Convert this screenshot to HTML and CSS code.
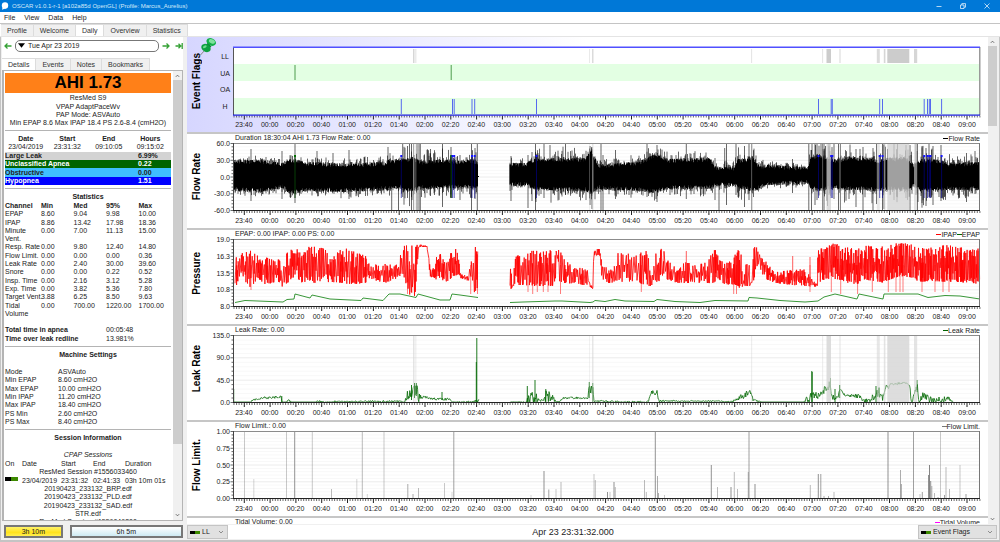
FILE: index.html
```html
<!DOCTYPE html>
<html lang="en">
<head>
<meta charset="utf-8">
<title>OSCAR</title>
<link rel="stylesheet" href="styles.css">
</head>
<body>
<div class="app">
  <header class="titlebar">
    <svg class="logo" viewBox="0 0 8 8" aria-hidden="true"><ellipse cx="4" cy="3.6" rx="3.2" ry="3.3" fill="#fff"/><path d="M1.6 5.5L1 7.8L4 6.6z" fill="#fff"/></svg>
    <span class="window-title">OSCAR v1.0.1-r-1 [a102a85d OpenGL] (Profile: Marcus_Aurelius)</span>
    <div class="window-buttons">
      <button aria-label="Minimize"><svg viewBox="0 0 6 6"><path d="M0.5 3.5H5.5"/></svg></button>
      <button aria-label="Restore"><svg viewBox="0 0 6 6"><path d="M0.5 2H4V5.5H0.5zM1.8 2V0.6H5.5V4.2H4"/></svg></button>
      <button aria-label="Close"><svg viewBox="0 0 6 6"><path d="M0.5 0.5L5.5 5.5M5.5 0.5L0.5 5.5"/></svg></button>
    </div>
  </header>
  <nav class="menubar">
    <button>File</button><button>View</button><button>Data</button><button>Help</button>
  </nav>
  <div class="tabs main-tabs" role="tablist">
    <button role="tab">Profile</button><button role="tab">Welcome</button><button role="tab" aria-selected="true">Daily</button><button role="tab">Overview</button><button role="tab">Statistics</button>
  </div>
  <main class="workspace">
    <aside class="sidebar">
      <div class="datenav">
        <button class="arrow" aria-label="Previous day"><svg viewBox="0 0 8 8"><path d="M7.5 4H1M3.5 1.5L1 4L3.5 6.5"/></svg></button>
        <button class="date"><svg viewBox="0 0 8 5" aria-hidden="true"><path d="M0 0H8L4 5z"/></svg>Tue Apr 23 2019</button>
        <button class="arrow" aria-label="Next day"><svg viewBox="0 0 8 8"><path d="M0.5 4H7M4.5 1.5L7 4L4.5 6.5"/></svg></button>
        <button class="arrow last" aria-label="Latest day"><svg viewBox="0 0 8 8"><path d="M0.5 4H5.5M3.5 1.8L5.8 4L3.5 6.2M7.2 1V7"/></svg></button>
      </div>
      <div class="tabs side-tabs" role="tablist">
        <button role="tab" aria-selected="true">Details</button><button role="tab">Events</button><button role="tab">Notes</button><button role="tab">Bookmarks</button>
      </div>
      <div class="pane">
        <div class="details">
          <h1>AHI 1.73</h1>
          <div class="machine"><p>ResMed S9</p><p>VPAP AdaptPaceWv</p><p>PAP Mode: ASVAuto</p><p>Min EPAP 8.6 Max IPAP 18.4 PS 2.6-8.4 (cmH2O)</p></div>
          <hr>
          <table class="span-table">
            <tr><th>Date</th><th>Start</th><th>End</th><th>Hours</th></tr>
            <tr><td>23/04/2019</td><td>23:31:32</td><td>09:10:05</td><td>09:15:02</td></tr>
          </table>
          <table class="index-table">
            <tr class="leak"><th>Large Leak</th><td>6.99%</td></tr>
            <tr class="unclassified"><th>Unclassified Apnea</th><td>0.22</td></tr>
            <tr class="obstructive"><th>Obstructive</th><td>0.00</td></tr>
            <tr class="hypopnea"><th>Hypopnea</th><td>1.51</td></tr>
          </table>
          <hr>
          <table class="stats-table">
            <caption>Statistics</caption>
            <colgroup><col class="c-name"><col><col><col><col></colgroup>
            <tr><th>Channel</th><th>Min</th><th>Med</th><th>95%</th><th>Max</th></tr>
            <tr><td>EPAP</td><td>8.60</td><td>9.04</td><td>9.98</td><td>10.00</td></tr>
            <tr><td>IPAP</td><td>8.86</td><td>13.42</td><td>17.98</td><td>18.36</td></tr>
            <tr class="two"><td>Minute<br>Vent.</td><td>0.00</td><td>7.00</td><td>11.13</td><td>15.00</td></tr>
            <tr><td>Resp. Rate</td><td>0.00</td><td>9.80</td><td>12.40</td><td>14.80</td></tr>
            <tr><td>Flow Limit.</td><td>0.00</td><td>0.00</td><td>0.00</td><td>0.36</td></tr>
            <tr><td>Leak Rate</td><td>0.00</td><td>2.40</td><td>30.00</td><td>39.60</td></tr>
            <tr><td>Snore</td><td>0.00</td><td>0.00</td><td>0.22</td><td>0.52</td></tr>
            <tr><td>Insp. Time</td><td>0.00</td><td>2.16</td><td>3.12</td><td>5.28</td></tr>
            <tr><td>Exp. Time</td><td>0.00</td><td>3.82</td><td>5.36</td><td>7.80</td></tr>
            <tr><td>Target Vent.</td><td>3.88</td><td>6.25</td><td>8.50</td><td>9.63</td></tr>
            <tr><td>Tidal<br>Volume</td><td>0.00</td><td>700.00</td><td>1220.00</td><td>1700.00</td></tr>
          </table>
          <table class="totals-table">
            <tr><th>Total time in apnea</th><td>00:05:48</td></tr>
            <tr><th>Time over leak redline</th><td>13.981%</td></tr>
          </table>
          <hr>
          <h2>Machine Settings</h2>
          <table class="settings-table">
            <tr><td>Mode</td><td>ASVAuto</td></tr>
            <tr><td>Min EPAP</td><td>8.60 cmH2O</td></tr>
            <tr><td>Max EPAP</td><td>10.00 cmH2O</td></tr>
            <tr><td>Min IPAP</td><td>11.20 cmH2O</td></tr>
            <tr><td>Max IPAP</td><td>18.40 cmH2O</td></tr>
            <tr><td>PS Min</td><td>2.60 cmH2O</td></tr>
            <tr><td>PS Max</td><td>8.40 cmH2O</td></tr>
          </table>
          <hr>
          <h2>Session Information</h2>
          <table class="session-table">
            <caption>CPAP Sessions</caption>
            <colgroup><col class="c-on"><col class="c-date"><col class="c-time"><col class="c-time"><col></colgroup>
            <tr><td>On</td><td>Date</td><td>Start</td><td>End</td><td>Duration</td></tr>
            <tr><td colspan="5" class="mid">ResMed Session #1556033460</td></tr>
            <tr><td><i class="switch"></i></td><td>23/04/2019</td><td>23:31:32</td><td>02:41:33</td><td>03h 10m 01s</td></tr>
            <tr><td colspan="5" class="mid">20190423_233132_BRP.edf</td></tr>
            <tr><td colspan="5" class="mid">20190423_233132_PLD.edf</td></tr>
            <tr><td colspan="5" class="mid">20190423_233132_SAD.edf</td></tr>
            <tr><td colspan="5" class="mid">STR.edf</td></tr>
            <tr><td colspan="5" class="mid">ResMed Session #1556046300</td></tr>
          </table>
        </div>
        <div class="scrollbar side-scroll" aria-hidden="true"><svg viewBox="0 0 6 4"><path d="M1 3L3 1L5 3"/></svg><div class="track"><div class="thumb"></div></div><svg viewBox="0 0 6 4"><path d="M1 1L3 3L5 1"/></svg></div>
      </div>
      <div class="sessions"><button class="night-a">3h 10m</button><button class="night-b">6h 5m</button></div>
    </aside>
    <section class="content">
      <div class="graph-area">
        <div class="graphs">
          <section class="graph events">
            <div class="gutter"><span class="name">Event Flags</span><div class="rows"><span>LL</span><span>UA</span><span>OA</span><span>H</span></div>
              <svg class="pin" viewBox="0 0 18 18" aria-hidden="true"><path d="M6 12L1 17.5" stroke="#888"/><ellipse cx="12.2" cy="4" rx="5" ry="3.6" transform="rotate(25 12.2 4)" fill="#12b048"/><ellipse cx="12.9" cy="3.4" rx="3.2" ry="2" transform="rotate(25 12.9 3.4)" fill="#7ee29c"/><path d="M8.5 5L12.5 8.5L9.5 11L6 8z" fill="#0a8a34"/><ellipse cx="7" cy="10" rx="5" ry="3.8" transform="rotate(30 7 10)" fill="#0fa040"/><ellipse cx="5.8" cy="8.8" rx="2" ry="1.2" transform="rotate(-30 5.8 8.8)" fill="#6fdc90"/></svg>
            </div>
            <svg class="plot" id="flags" viewBox="233 47 747 68" preserveAspectRatio="none"></svg>
            <div class="axis"></div>
          </section>
          <section class="graph">
            <div class="caption"><span>Duration 18:30:04 AHI 1.73 Flow Rate: 0.00</span><span class="legend"><i class="key black"></i>Flow Rate</span></div>
            <div class="gutter"><span class="name">Flow Rate</span><div class="scale"><span>60.0</span><span>30.0</span><span>0.0</span><span>-30.0</span><span>-60.0</span></div></div>
            <svg class="plot" id="flow" viewBox="233 143 747 68" preserveAspectRatio="none"></svg>
            <div class="axis"></div>
          </section>
          <section class="graph">
            <div class="caption"><span>EPAP: 0.00 IPAP: 0.00 PS: 0.00</span><span class="legend"><i class="key red"></i>IPAP<i class="key green"></i>EPAP</span></div>
            <div class="gutter"><span class="name">Pressure</span><div class="scale"><span>19.0</span><span>16.3</span><span>13.5</span><span>10.8</span><span>8.0</span></div></div>
            <svg class="plot" id="pressure" viewBox="233 239 747 68" preserveAspectRatio="none"></svg>
            <div class="axis"></div>
          </section>
          <section class="graph">
            <div class="caption"><span>Leak Rate: 0.00</span><span class="legend"><i class="key green"></i>Leak Rate</span></div>
            <div class="gutter"><span class="name">Leak Rate</span><div class="scale"><span>135.0</span><span>90.0</span><span>45.0</span><span>0.0</span></div></div>
            <svg class="plot" id="leak" viewBox="233 335 747 68" preserveAspectRatio="none"></svg>
            <div class="axis"></div>
          </section>
          <section class="graph">
            <div class="caption"><span>Flow Limit.: 0.00</span><span class="legend"><i class="key gray"></i>Flow Limit.</span></div>
            <div class="gutter"><span class="name">Flow Limit.</span><div class="scale"><span>1.00</span><span>0.75</span><span>0.50</span><span>0.25</span><span>0.00</span></div></div>
            <svg class="plot" id="limit" viewBox="233 431 747 68" preserveAspectRatio="none"></svg>
            <div class="axis"></div>
          </section>
          <section class="graph">
            <div class="caption"><span>Tidal Volume: 0.00</span><span class="legend"><i class="key magenta"></i>Tidal Volume</span></div>
          </section>
        </div>
        <div class="scrollbar main-scroll" aria-hidden="true"><svg viewBox="0 0 6 4"><path d="M1 3L3 1L5 3"/></svg><div class="track"><div class="thumb"></div></div><svg viewBox="0 0 6 4"><path d="M1 1L3 3L5 1"/></svg></div>
      </div>
      <footer class="statusbar">
        <label class="combo combo-flag"><i class="switch"></i><select aria-label="Event type"><option>LL</option></select><svg viewBox="0 0 6 4"><path d="M1 1L3 3L5 1"/></svg></label>
        <output>Apr 23 23:31:32.000</output>
        <label class="combo combo-graph"><i class="switch"></i><select aria-label="Graph"><option>Event Flags</option></select><svg viewBox="0 0 6 4"><path d="M1 1L3 3L5 1"/></svg></label>
      </footer>
    </section>
  </main>
</div>
<script src="charts.js"></script>
</body>
</html>
```
FILE: styles.css
```css
* { box-sizing: border-box; }
body { margin: 0; font: 7px/8px "Liberation Sans", Arial, sans-serif; color: #222; background: #f0f0f0; }
button, select, output { font: inherit; color: inherit; }
button { border: 0; background: none; padding: 0; }
p, h1, h2 { margin: 0; font-size: inherit; }
svg { display: block; fill: none; }
.app { height: 100vh; display: flex; flex-direction: column; overflow: hidden; }

.titlebar { flex: none; height: 12px; background: #0078d7; color: #d6e9fa; display: flex; align-items: center; padding: 0 1px; }
.logo { width: 8px; height: 8px; }
.window-title { margin-left: 3px; font-size: 6px; flex: 1; }
.window-buttons { display: flex; }
.window-buttons button { width: 24px; height: 12px; display: grid; place-items: center; }
.window-buttons svg { width: 6px; height: 6px; stroke: #fff; stroke-width: .7; }
.menubar { flex: none; height: 12px; background: #fff; display: flex; gap: 9px; padding-left: 4px; border-bottom: 1px solid #c4c4c4; }

.tabs { display: flex; flex: none; }
.tabs button { background: #f0f0f0; border: 1px solid #dcdcdc; border-width: 1px 1px 0 0; color: #333; }
.tabs button[aria-selected] { background: #fff; }
.main-tabs { height: 13px; background: #fff; padding-left: 1px; border-bottom: 1px solid #e4e4e4; }
.main-tabs button { padding: 0 6px; }
.workspace { flex: 1; min-height: 0; display: flex; border: solid #c4c4c4; border-width: 0 1px 2px; }

.sidebar { flex: none; width: 182px; display: flex; flex-direction: column; padding-left: 1px; }
.datenav { height: 21px; display: flex; align-items: center; gap: 3px; padding: 0 0 4px 2px; background: #fff; }
.arrow svg { width: 8px; height: 8px; stroke: #35a135; stroke-width: 1.3; }
.arrow.last { margin-left: 2px; }
.date { flex: 1; height: 12px; border: 1px solid #777; border-radius: 5px; background: #fff; display: flex; align-items: center; gap: 3px; padding-left: 2px; }
.date svg { width: 7px; height: 5px; fill: #000; }
.side-tabs { height: 12px; background: #fff; }
.side-tabs button { padding: 0 6px; }
.pane { flex: 1; min-height: 0; display: flex; background: #fff; border: 2px solid #b4b4b4; border-width: 1px 1px 1px 2px; }
.details { flex: 1; min-width: 0; overflow: hidden; padding: 2px 2px 0 1px; }
.details h1 { background: #ff8018; color: #000; text-align: center; font-size: 17px; line-height: 20px; }
.machine { text-align: center; white-space: nowrap; padding-top: 1px; }
.machine p:nth-child(2) { padding-top: 1px; }
.details hr { height: 1px; border: 0; background: #b4b4b4; margin: 3px 0 4px; }
.details h2 { text-align: center; margin-bottom: 9px; }
table { width: 100%; border-collapse: collapse; table-layout: fixed; white-space: nowrap; }
td, th { padding: 0; text-align: left; vertical-align: top; }
tr:nth-child(3n) > * { padding-top: 1px; }
caption { padding-bottom: 1px; }
.span-table :is(td, th) { text-align: center; }
.span-table tr:last-child td { padding-bottom: 1px; }
.index-table { font-weight: bold; }
.index-table td { width: 33px; }
.leak { background: #d3d3d3; }
.unclassified { background: #006400; color: #fff; }
.obstructive { background: #3fbfff; }
.hypopnea { background: #00f; color: #fff; }
.stats-table caption { font-weight: bold; }
.c-name { width: 36px; }
.totals-table { margin-top: 8px; }
.totals-table td { width: 65px; }
.totals-table tr:last-child > * { padding-top: 1px; }
.settings-table td:last-child { width: 113px; }
.session-table caption { font-style: italic; }
.c-on { width: 17px; }
.c-date { width: 39px; }
.c-time { width: 32px; }
.mid { text-align: center; }
.switch { display: block; flex: none; width: 13px; height: 4px; background: linear-gradient(90deg, #000 50%, #3d8a00 50%); }
.sessions { height: 19px; display: flex; gap: 7px; padding: 4px 0 2px 2px; }
.sessions button { border: 2px solid #777; }
.night-a { flex: 54; background: linear-gradient(#fff36a, #ffe21c 60%, #ffef50); }
.night-b { flex: 108; background: linear-gradient(#fff, #cdeaf3); }

.scrollbar { flex: none; display: flex; flex-direction: column; align-items: center; background: #f0f0f0; padding: 3px 0; }
.scrollbar svg { width: 5px; height: 4px; stroke: #555; flex: none; }
.track { flex: 1; width: 100%; padding-top: 2px; }
.thumb { background: #cdcdcd; }
.side-scroll { width: 9px; }
.side-scroll .thumb { height: 84%; }
.main-scroll { width: 9px; }
.main-scroll .thumb { height: 17%; }

.content { flex: 1; min-width: 0; display: flex; flex-direction: column; padding: 0 2px 0 4px; }
.graph-area { flex: 1; min-height: 0; display: flex; }
.graphs { flex: 1; min-width: 0; overflow: hidden; background: #fff; }
.graph { display: grid; grid-template-columns: 46px 1fr 8px; border-top: 2px solid #c6c6c6; }
.events { border-top: 0; padding-top: 10px; background: linear-gradient(90deg, #d6d6ff, #fff 50%); position: relative; }
.caption { grid-column: 2; grid-row: 1; height: 9px; display: flex; justify-content: space-between; padding-left: 2px; white-space: nowrap; }
.legend { display: flex; align-items: center; }
.key { width: 5px; height: 1px; }
.black { background: #000; }
.red { background: red; }
.green { background: #006400; }
.gray { background: #777; }
.magenta { background: #f0f; }
.gutter { grid-column: 1; grid-row: 2; display: flex; justify-content: space-between; align-items: center; padding-right: 3px; }
.name { writing-mode: vertical-rl; transform: rotate(180deg); font-size: 10px; line-height: 12px; font-weight: bold; color: #000; margin-left: 4px; text-align: center; white-space: nowrap; }
.scale { align-self: stretch; margin: -3px 0 -4px; display: flex; flex-direction: column; justify-content: space-between; text-align: right; }
.rows { align-self: stretch; display: grid; grid-template-rows: repeat(4, 1fr); align-items: center; text-align: center; width: 10px; padding-top: 2px; }
.pin { position: absolute; left: 12px; top: 1px; width: 18px; height: 18px; }
.plot { grid-column: 2; grid-row: 2; width: 100%; height: 68px; overflow: visible; min-width: 0; }
.axis { grid-column: 2; grid-row: 3; height: 17px; padding-top: 6px; margin-left: -2px; display: flex; }
.axis span { flex: 1 1 0; min-width: 0; text-align: center; }

.statusbar { flex: none; height: 16px; display: flex; background: #f0f0f0; padding: 1px 0; }
.statusbar output { flex: 1; background: #fff; text-align: center; font-size: 9px; line-height: 14px; }
.combo { display: flex; align-items: center; background: #e1e1e1; border: 1px solid #c4c4c4; padding: 0 3px 0 2px; gap: 2px; }
.combo .switch { width: 10px; height: 3px; }
.combo select { appearance: none; border: 0; background: none; padding: 0; flex: 1; min-width: 0; color: #222; }
.combo svg { width: 6px; height: 4px; stroke: #777; stroke-width: .8; }
.combo-flag { width: 41px; }
.combo-graph { width: 79px; }
```
FILE: charts.js
```js
const L = 233, R = 980, STEP = 25.81, FIRST = 244.3;
let seed = 7;
const rnd = () => { seed = (seed * 16807) % 2147483647; return seed / 2147483647; };
const f = n => n.toFixed(1);
const rect = (x, y, w, h, c) => `<rect x="${x}" y="${y}" width="${w}" height="${h}" fill="${c}"/>`;
const line = (d, c, w = 1, o = 1) => `<path d="${d}" stroke="${c}" stroke-width="${w}" opacity="${o}"/>`;

// Linear interpolation of every column of a table keyed by x
function at(t, x) {
  let i = 0;
  while (i < t.length - 2 && t[i + 1][0] < x) i++;
  const a = t[i], b = t[i + 1], k = Math.max(0, Math.min(1, (x - a[0]) / (b[0] - a[0] || 1)));
  return a.slice(1).map((v, j) => v + (b[j + 1] - v) * k);
}

function ticks(base) {
  let minor = '', major = '';
  for (let i = -4; i <= 285; i++) {
    const x = FIRST + i * STEP / 10;
    if (x > R) break;
    if (i % 10 === 0) major += `M${f(x)} ${base}v4`; else minor += `M${f(x)} ${base}v2`;
  }
  return line(minor, '#444', .8) + line(major, '#222', 1);
}

function frame(top, steps) {
  const n = steps * 5;
  let grid = '', strong = '', side = '';
  for (let i = 0; i <= n; i++) {
    const y = top + 67 * i / n + .5;
    if (i % 5) { grid += `M${L} ${f(y)}H${R}`; side += `M${L - 1.5} ${f(y)}h2`; }
    else { strong += `M${L} ${f(y)}H${R}`; side += `M${L - 2.5} ${f(y)}h3`; }
  }
  return line(grid, '#f8f8f8') + line(strong, '#ececec') + line(side, '#444', .8);
}
const border = top => line(`M${L} ${top + .5}H${R}`, '#8c8c8c') + line(`M${R - .5} ${top}v68`, '#777') +
  line(`M${L + .5} ${top}v68`, '#444') + line(`M${L} ${top + 67.5}H${R}`, '#222') + ticks(top + 68);

const leaks = [[413, 1.5, .8], [415, 1.5, .4], [589.3, .7, .6], [592, 1.5, .7], [751.3, .8, .7], [822.3, .8, .7], [826.5, 4.5, 1],
  [839.5, 1, .8], [876.8, 3, .7], [883.8, 1.6, .8], [887.3, 22, 1], [914, 3.2, .8]];
const leakBars = (y, h) => leaks.map(([x, w, o]) => `<rect x="${x}" y="${y}" width="${w}" height="${h}" fill="rgb(210,210,210)" opacity="${.76 * o}"/>`).join('');
const hyp = [401.3, 452.5, 454.2, 472, 474.7, 536.5, 818.5, 831.2, 832.3, 879.7, 882.5, 924.2, 927.5, 929.3, 930.5, 941.6];
const unc = [295, 451.2];

document.getElementById('flags').innerHTML =
  rect(L, 47, R - L, 17, '#fff') + rect(L, 64, R - L, 17, '#e3ffe3') + rect(L, 81, R - L, 17, '#fff') + rect(L, 98, R - L, 17, '#e3ffe3') +
  leaks.map(([x, w, o]) => `<rect x="${x}" y="49" width="${w}" height="14" fill="#ccc" opacity="${o}"/>`).join('') +
  unc.map(x => line(`M${x} 65v15`, '#4d9c4d')).join('') + hyp.map(x => line(`M${x} 99v15`, '#4658f0', .9)).join('') +
  rect(R - 1, 47, 1.5, 68, '#999') + line(`M${L + .5} 47v68`, '#555') + rect(L, 46.5, R - L, 1.5, '#5050ff') + ticks(115.5) + rect(L, 114.5, R - L, 1.2, '#1818e0');

// Flow rate: upper edge, lower edge, spike strength
const env = [[234, 161, 190, 3], [262, 161, 191, 3], [283, 164, 187, 3], [290, 160, 193, 4], [310, 163, 190, 3], [345, 165, 191, 5], [385, 163, 189, 4], [388, 161, 189, 5],
  [400, 160, 187, 5], [404, 160, 191, 9], [412, 158, 190, 11], [422, 162, 188, 8], [440, 160, 188, 8], [460, 162, 187, 5], [470, 160, 188, 8], [477, 162, 187, 8],
  [510, 164, 185, 5], [526, 164, 185, 5], [532, 160, 188, 9], [560, 159, 190, 8], [586, 159, 190, 6], [591, 150, 194, 10], [598, 165, 188, 4], [612, 165, 189, 4],
  [640, 162, 190, 6], [655, 155, 192, 6], [668, 160, 188, 5], [710, 159, 188, 5], [716, 168, 185, 5], [734, 168, 185, 5], [738, 160, 187, 8], [745, 160, 189, 9], [753, 157, 190, 9],
  [757, 165, 189, 4], [768, 166, 184, 3], [808, 168, 183, 2], [811, 157, 188, 11], [820, 155, 190, 14], [830, 160, 188, 10], [838, 160, 188, 9], [848, 158, 189, 9], [871, 159, 189, 8], [876, 162, 190, 12],
  [886, 159, 189, 10], [905, 158, 190, 9], [914, 165, 186, 8], [921, 160, 191, 11], [935, 160, 190, 8], [950, 164, 189, 6], [980, 163, 189, 6]];
let body = '', spikes = '';
for (let x = 234; x < R; x += .5) {
  if (x > 477.5 && x < 510) continue;
  const [t, b, s] = at(env, x);
  body += `M${f(x)} ${f(t - 1 + rnd() * 4)}V${f(b + 1 - rnd() * 4)}`;
  if (rnd() < .5) {
    const p = rnd() ** 3;
    spikes += `M${f(x)} ${f(Math.max(144, t - 1 - p * s * 1.5))}V${f(Math.min(210, b + 1 + (rnd() ** 3) * s * 1.5))}`;
  }
}
const tall = [[251, 149, 201], [282, 151, 199], [295, 143, 203], [317, 151, 193], [333, 153, 192], [349, 150, 199], [388, 147, 190], [391.7, 160, 210], [398.5, 160, 210], [402.7, 143, 197],
  [407.5, 146, 198], [411.5, 143, 210], [413.5, 143, 210], [417, 143, 210], [419, 143, 210], [420.3, 143, 210], [430.5, 149, 196], [442.5, 143, 207], [451, 147, 198], [460, 155, 200], [471.5, 143, 210], [475, 148, 199], [477.3, 143, 210],
  [511, 156, 201], [528, 155, 208], [532, 152, 201], [535.5, 143, 210], [544, 143, 198], [550, 145, 190], [565.5, 143, 195], [590, 146, 205], [592, 147, 209], [601, 143, 210], [603, 155, 210], [615.5, 150, 199], [647, 143, 197], [657, 145, 202], [686.3, 143, 199],
  [694, 153, 194], [715, 158, 200], [719, 168, 210], [724.7, 148, 188], [726.5, 143, 205], [736, 143, 195], [744.5, 146, 207], [749, 143, 200], [751.7, 143, 210], [792.5, 159, 193], [808.8, 143, 210], [811.5, 150, 210], [815, 143, 205], [817, 143, 200], [822.5, 143, 210],
  [824, 143, 210], [829, 143, 195], [834, 143, 199], [838.5, 143, 210], [840.5, 143, 210], [856, 149, 207], [863, 147, 210], [873, 148, 210], [876.5, 144, 204], [882.5, 143, 210], [884, 145, 209], [894, 143, 200], [906, 145, 198], [910, 145, 210], [916, 143, 195], [917.5, 143, 210],
  [922, 146, 203], [926, 148, 206], [929, 143, 197], [933, 146, 205], [941, 145, 201], [966.5, 153, 202], [975, 151, 194]].map(([x, a, b]) => `M${x} ${a}V${b}`).join('');
document.getElementById('flow').innerHTML = frame(143, 4) + line(spikes, '#000', .7, .85) + line(tall, '#111', .8, .8) + line(body, '#000', 1) +
  rect(476, 176, 3, 1, '#000') + leakBars(144, 66) + unc.map(x => line(`M${x} 156V198`, '#063f06') + rect(x - 1, 155, 2, 2, '#007000')).join('') +
  hyp.map(x => line(`M${x} 156V198`, '#000090', .7, .9) + rect(x - 1, 155, 2, 2, '#1414ff')).join('') + border(143);

// Pressure: high edge and low edge of the IPAP swing
const ipapA = [[235, 258, 287], [243, 252, 279], [251, 250, 288], [258, 256, 278], [265, 256, 285], [275, 261, 282], [283, 256, 287], [288, 250, 283], [296, 245, 275], [301, 255, 283], [308, 247, 281], [315, 246, 283], [325, 249, 283],
  [332, 258, 282], [340, 250, 283], [350, 248, 284], [357, 253, 284], [365, 255, 283], [370, 265, 279], [385, 263, 283], [398, 265, 278], [401, 244, 275], [405, 246, 278], [408, 245, 295], [415, 246, 296], [419, 244, 247],
  [427, 246, 247], [430, 265, 276], [434, 260, 280], [440, 253, 278], [445, 263, 282], [450, 256, 280], [453, 244, 276], [458, 248, 275], [460, 273, 278], [469, 277, 281], [470.5, 247, 288], [478, 247, 296]];
const ipapB = [[510, 258, 290], [513, 285, 287], [515, 252, 285], [525, 257, 285], [530, 251, 286], [555, 250, 286], [557, 250, 255], [560, 250, 285], [563, 258, 284], [575, 266, 283], [588, 270, 286], [590, 284, 287], [593, 287, 289], [593.6, 249, 255], [600, 249, 256],
  [602, 265, 281], [612, 270, 284], [619, 250, 282], [627, 253, 282], [635, 256, 281], [645, 250, 285], [648, 253, 286], [652, 282, 286], [655, 250, 280], [658, 248, 283], [663, 249, 275], [668, 260, 280], [678, 270, 283], [686, 260, 283], [692, 266, 283], [708, 262, 284],
  [711, 250, 284], [718, 250, 280], [724, 264, 284], [733, 260, 285], [737, 249, 285], [741, 253, 290], [743, 283, 286], [748, 252, 286], [751, 284, 286], [754, 247, 280], [758, 247, 265], [765, 260, 279], [775, 272, 283], [792, 270, 285], [803, 268, 286], [808, 273, 286], [817, 284, 287],
  [818, 250, 284], [825, 246, 279], [835, 243, 279], [841, 246, 280], [848, 247, 283], [857, 250, 285], [862, 244, 279], [873, 247, 281], [880, 249, 283], [884, 244, 282], [900, 243, 276], [915, 244, 278], [918, 248, 282], [930, 246, 281], [952, 245, 282], [960, 247, 282], [968, 250, 283], [980, 248, 284]];
function swing(t) {
  let d = '', up = false, x = t[0][0];
  while (x < t[t.length - 1][0]) {
    const [h, l] = at(t, x), g = l - h, r = rnd();
    const y = up ? h + g * r * r * .5 : l - g * r * r * r * .4;
    d += (d ? 'L' : 'M') + f(x) + ' ' + f(y);
    up = !up;
    x += .2 + rnd() * rnd() * (x > 818 ? 1 : 1.7);
  }
  return d;
}
const dips = [251, 407.5, 411, 415, 470.7, 477.5, 528, 532.7, 537.3, 543.3, 548, 560.5, 641.3, 733.7, 736.5, 810, 831.3, 840.7, 857.6, 872.3, 888.3, 896, 900, 903, 922, 935, 943, 949].map((x, i) => `M${x} 265V${i ? 294 - (x % 1 > .4 ? 0 : 2) : 290}`).join('');
const epap = 'M235 302.5L245 300.5L283 302L287 299.5L294 299L295 294L310 298L312 295L330 299L361 300.5L363 298L383 300.5L388 295L389 294L400 294L416 297.5L418 294L440 300L450 300L452 294L460 295L478 297.5' +
  'M510 302.5L523 302L555 301L562 301L590 302.5L593 302L595 300.5L605 301.5L615 299.5L625 301L654 301.5L657 299.5L675 301.5L700 302.5L715 300.5L748 301L749 297.5L757 298L780 300.5L805 302L818 301L824 297L835 294L857 299L859 294L883 299L884 294L918 294L928 297.5L945 295.5L960 296L980 299';
document.getElementById('pressure').innerHTML = frame(239, 4) + line(dips, '#f33', .8, .8) + line(swing(ipapA), 'red', .8) + line(swing(ipapB), 'red', .8) +
  line('M810 287V257M792.7 285V256M686.3 280V251', '#f33', .8) + line(epap, '#228b22', .9) + border(239);

// Leak rate: level and jitter
const leakA = [[234, 402, 0], [251, 402, 0], [252, 400.5, 1], [263, 398, 2], [281, 397, 2], [282, 402, 1], [286, 402, 0], [289, 401, 3], [292, 402, 0], [316, 402, 0], [318, 401, 2], [324, 402, 1], [332, 402, 0], [334, 401.5, 1.5], [352, 401.5, 1], [380, 401.5, 2], [400, 401, 1],
  [404, 402, 1], [407, 395, 8], [412, 394, 10], [417, 388, 10], [419, 398, 10], [423, 397, 2], [435, 399, 2], [450, 399, 2], [452, 402, 0], [472, 402, 2], [479, 401, 3]];
const leakB = [[510, 402, 1], [512, 402, 0], [525, 402, 1], [528, 397, 10], [532, 398, 10], [538, 399, 8], [540, 401, 2], [544, 400, 2], [546, 396, 10], [553, 397, 8], [556, 402, 0], [560, 401, 1], [564, 398, 2], [588, 398, 2], [589, 388, 10], [593, 393, 10], [594, 401, 1], [612, 401.5, 2],
  [620, 402, 1], [648, 402, 2], [652, 392, 4], [657, 393, 5], [659, 401, 2], [675, 401, 1], [720, 401, 1], [727, 402, 1], [734, 401, 2], [738, 398, 4], [745, 395, 6], [751, 391, 6], [753, 400, 2], [762, 402, 0], [803, 402, 0], [809, 398, 8], [814, 394, 8], [818, 396, 5], [824, 390, 8],
  [830, 385, 7], [832, 396, 4], [835, 400, 6], [840, 392, 6], [845, 395, 2], [860, 396, 4], [864, 401, 4], [871, 401, 4], [873, 397, 8], [879, 392, 8], [882, 398, 8], [886, 389, 6], [892, 384, 2], [906, 383, 2], [910, 387, 2], [911, 402, 1], [914, 397, 7], [917, 385, 7],
  [919, 400, 5], [924, 393, 8], [930, 400, 6], [940, 400, 5], [950, 399, 5], [953, 402, 0]];
function wander(t) {
  let d = '';
  for (let x = t[0][0]; x < t[t.length - 1][0]; x += .6) {
    const [y, j] = at(t, x);
    d += (d ? 'L' : 'M') + f(x) + ' ' + f(Math.min(402.4, y + (rnd() - .5) * j * 1.2));
  }
  return d;
}
document.getElementById('leak').innerHTML = frame(335, 3) + line(wander(leakA) + wander(leakB), '#066b06', .8) +
  line('M233.7 389V402M281.8 396V402M411.5 385V400M414.5 383V398M416.3 383V396M442 392V400M476.8 338V402M476.3 362V402M527.3 386V402M535 380V402M545.8 389V402M589.3 382V398M592.7 383V402M811.8 371V402M812.2 372V402M830.5 378V390M835 389V402M839.7 385V398M876 386V402M917 380V392', '#066b06', .9) +
  leakBars(336, 66) + border(335);

// Flow limitation: position, top, darkness
const bars = [[244.5, 431, .4], [253.8, 479, .3], [286.5, 431, .4], [294.7, 431, .8], [312.3, 431, .4], [331.5, 489, .5], [356.8, 479, .3], [362.3, 431, .5], [367.3, 494, .3], [384, 431, .4], [407.8, 484, .6], [413, 494, .6], [418.5, 488, .5], [444.5, 483, .4], [452, 492, .3], [453.8, 431, .7],
  [531, 495, .3], [544, 471, .8], [548.8, 489.5, .7], [556, 489, .4], [561, 482, .5], [594, 474, .4], [595.3, 480, .5], [607.5, 492, .8], [610, 492, .4], [614, 482, .8], [615.3, 487, .5], [644.5, 480, .5], [646.3, 492, .5], [655.3, 431, .8], [657.5, 476, .6], [658.5, 493, .6], [664.5, 495, .4],
  [711.3, 465, .8], [717.5, 487, .5], [731, 487, .8], [734.3, 472, .5], [737.5, 489, .5], [748.3, 472, .6], [749, 431, .7], [755, 484, .8], [810.3, 485, .5], [818.3, 474, .8], [820.8, 474, .7], [824, 496, .6], [828.5, 496, .6], [834, 492, .5], [888, 431, .8], [900.5, 470, .6], [901.3, 484, .7], [913.5, 431, .7],
  [920, 494, .4], [922.3, 492, .7], [928.5, 475, .8], [929.5, 465, .9], [930.7, 481, .8], [931.8, 486, .6], [934.5, 493, .5], [938, 497, .7], [940.5, 431, .4], [944.5, 495, .7], [946, 467, .5], [949.5, 489, .5], [960, 465, .4], [966, 494, .7]];
document.getElementById('limit').innerHTML = frame(431, 4) + bars.map(([x, y, o]) => line(`M${x} ${y}V498`, '#777', 1, o)).join('') + border(431);

document.querySelectorAll('.axis').forEach(el => {
  for (let i = 0; i < 29; i++) {
    const m = (1420 + i * 20) % 1440, s = document.createElement('span');
    s.textContent = String(Math.floor(m / 60)).padStart(2, '0') + ':' + String(m % 60).padStart(2, '0');
    el.append(s);
  }
});
```
